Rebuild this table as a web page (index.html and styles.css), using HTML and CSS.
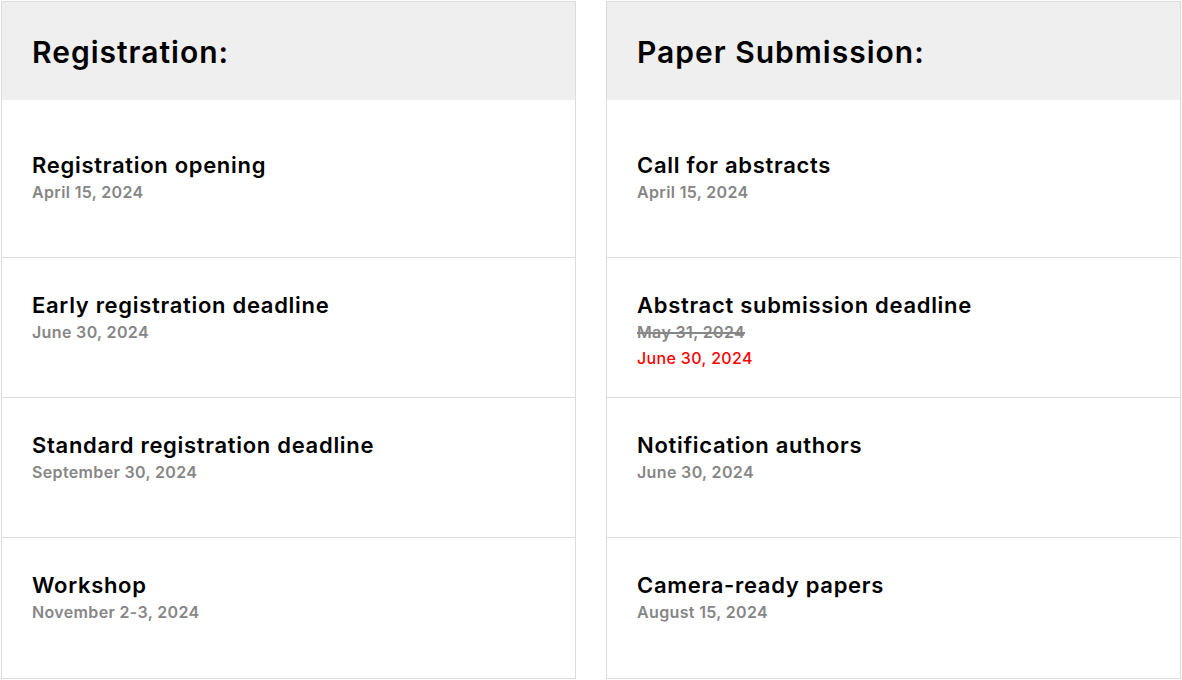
FILE: index.html
```html
<!DOCTYPE html>
<html lang="en">
<head>
<meta charset="utf-8">
<title>Important Dates</title>
<link rel="stylesheet" href="styles.css">
</head>
<body>
<div class="dates">
  <section class="card">
    <h2 class="card-head">Registration:</h2>
    <ul class="list">
      <li class="item"><h3 class="item-title">Registration opening</h3><div class="date">April 15, 2024</div></li>
      <li class="item"><h3 class="item-title">Early registration deadline</h3><div class="date">June 30, 2024</div></li>
      <li class="item"><h3 class="item-title">Standard registration deadline</h3><div class="date">September 30, 2024</div></li>
      <li class="item"><h3 class="item-title">Workshop</h3><div class="date">November 2-3, 2024</div></li>
    </ul>
  </section>
  <section class="card">
    <h2 class="card-head">Paper Submission:</h2>
    <ul class="list">
      <li class="item"><h3 class="item-title">Call for abstracts</h3><div class="date">April 15, 2024</div></li>
      <li class="item"><h3 class="item-title">Abstract submission deadline</h3><div class="date"><s>May 31, 2024</s></div><div class="date date-new">June 30, 2024</div></li>
      <li class="item"><h3 class="item-title">Notification authors</h3><div class="date">June 30, 2024</div></li>
      <li class="item"><h3 class="item-title">Camera-ready papers</h3><div class="date">August 15, 2024</div></li>
    </ul>
  </section>
</div>
</body>
</html>
```
FILE: styles.css
```css
* { box-sizing: border-box; }
html, body { margin: 0; padding: 0; background: #fff; }
body {
  font-family: Inter, "Noto Sans", sans-serif;
  color: #000;
  padding: 1px 0 0 1px;
}
.dates {
  display: flex;
  gap: 30px;
  width: 1180px;
}
.card {
  width: 575px;
  border: 1px solid #dcdcdc;
  background: #fff;
}
.card-head {
  margin: 0;
  background: #efefef;
  height: 98px;
  padding: 32px 30px 0;
  font-size: 30px;
  line-height: 36px;
  font-weight: 600;
  letter-spacing: 1px;
}
.list {
  list-style: none;
  margin: 0;
  padding: 0;
}
.item {
  height: 140px;
  padding: 33px 30px 0;
  border-bottom: 1px solid #dcdcdc;
}
.item:first-child {
  height: 158px;
  padding-top: 51px;
}
.item:last-child { border-bottom: 0; height: 140px; }
.item-title {
  margin: 0;
  font-size: 22px;
  line-height: 28px;
  font-weight: 600;
  letter-spacing: 0.7px;
}
.date {
  font-size: 16px;
  line-height: 26px;
  font-weight: 600;
  letter-spacing: 0.35px;
  color: #868686;
}
.date s { text-decoration-thickness: 1.5px; }
.date-new { color: #ff0000; font-weight: 500; }
```
